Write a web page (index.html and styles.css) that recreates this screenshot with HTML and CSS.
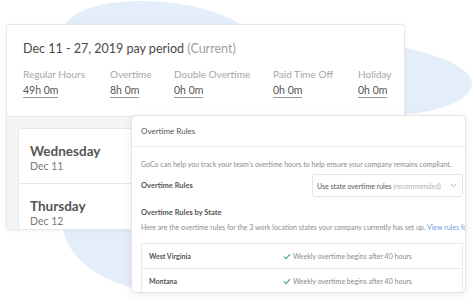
FILE: index.html
```html
<!doctype html>
<html lang="en">
<head>
    <meta charset="UTF-8">
    <meta name="viewport" content="width=device-width, initial-scale=1.0">
    <title>Pay period</title>
    <link rel="stylesheet" href="styles.css">
</head>
<body>
<svg class="blob" width="474" height="300" viewBox="0 0 474 300">
    <path d="M65,24 C78,7 108,1 145,1 C188,2 218,11 240,24 L405,48 C445,56 472,70 472,83 C472,100 440,112 405,114 L300,230 L132,288 C98,278 70,260 63,230 Z"/>
</svg>

<section class="period">
    <header class="period__head">
        <h1 class="period__title">Dec 11 - 27, 2019 pay period <span>(Current)</span></h1>
        <ul class="period__stats">
            <li class="period__stat">
                <span class="period__label">Regular Hours</span>
                <span class="period__value">49h 0m</span>
            </li>
            <li class="period__stat">
                <span class="period__label">Overtime</span>
                <span class="period__value">8h 0m</span>
            </li>
            <li class="period__stat">
                <span class="period__label">Double Overtime</span>
                <span class="period__value">0h 0m</span>
            </li>
            <li class="period__stat">
                <span class="period__label">Paid Time Off</span>
                <span class="period__value">0h 0m</span>
            </li>
            <li class="period__stat">
                <span class="period__label">Holiday</span>
                <span class="period__value">0h 0m</span>
            </li>
        </ul>
    </header>
    <div class="period__days">
        <ul class="days">
            <li class="days__item">
                <span class="days__name">Wednesday</span>
                <span class="days__date">Dec 11</span>
            </li>
            <li class="days__item">
                <span class="days__name">Thursday</span>
                <span class="days__date">Dec 12</span>
            </li>
        </ul>
    </div>
</section>

<section class="modal">
    <h2 class="modal__title">Overtime Rules</h2>
    <div class="modal__body">
        <p class="modal__text">GoCo can help you track your team's overtime hours to help ensure your company remains compliant.</p>
        <div class="modal__field">
            <span class="modal__label">Overtime Rules</span>
            <div class="select">
                <span>Use state overtime rules <em>(recommended)</em></span>
                <svg class="select__arrow" width="7" height="5" viewBox="0 0 7 5"><path d="M1 1.2 L3.5 3.6 L6 1.2"/></svg>
            </div>
        </div>
        <h3 class="modal__label modal__label--section">Overtime Rules by State</h3>
        <p class="modal__text modal__text--intro">Here are the overtime rules for the 3 work location states your company currently has set up. <a href="#">View rules for all states</a></p>
        <table class="rules">
            <tr>
                <td class="rules__state">West Virginia</td>
                <td class="rules__rule"><svg class="check" width="8" height="7" viewBox="0 0 8 7"><path d="M1 3.6 L3 5.6 L7 1.2"/></svg>Weekly overtime begins after 40 hours</td>
            </tr>
            <tr>
                <td class="rules__state">Montana</td>
                <td class="rules__rule"><svg class="check" width="8" height="7" viewBox="0 0 8 7"><path d="M1 3.6 L3 5.6 L7 1.2"/></svg>Weekly overtime begins after 40 hours</td>
            </tr>
        </table>
    </div>
</section>
</body>
</html>
```

FILE: styles.css
```css
html,
body {
    width: 474px;
    height: 300px;
    overflow: hidden;
}

body {
    margin: 0;
    padding: 24px 0 0 6px;
    box-sizing: border-box;
    background: #ffffff;
    font-family: Lato, "Noto Sans", Arial, sans-serif;
    color: #4b4b4b;
    position: relative;
}

ul {
    list-style: none;
    margin: 0;
    padding: 0;
}

.blob {
    position: absolute;
    left: 0;
    top: 0;
}

.blob path {
    fill: #e4eefa;
}

.period {
    position: relative;
    width: 399px;
    height: 206px;
    box-sizing: border-box;
    border: 1px solid #e7e8ea;
    border-radius: 3px;
    background: #ffffff;
    box-shadow: 0 1px 4px rgba(0, 0, 0, 0.06);
    overflow: hidden;
    display: flex;
    flex-direction: column;
}

.period__head {
    flex-shrink: 0;
    height: 92px;
    box-sizing: border-box;
    padding: 15px 16px 0;
    border-bottom: 1px solid #e6e7e9;
}

.period__title {
    margin: 0;
    font-size: 12.5px;
    line-height: 17px;
    font-weight: 400;
    color: #494949;
}

.period__title span {
    color: #a0a0a0;
}

.period__stats {
    margin-top: 11px;
    display: grid;
    grid-template-columns: 87px 64px 99px 85px auto;
}

.period__stat {
    display: flex;
    flex-direction: column;
    align-items: flex-start;
}

.period__label {
    font-size: 10px;
    line-height: 12px;
    color: #a6a6a6;
}

.period__value {
    margin-top: 4px;
    font-size: 10.5px;
    line-height: 12px;
    color: #555555;
    padding-bottom: 1px;
    border-bottom: 1px solid #9a9a9a;
}

.period__days {
    flex: 1;
    min-height: 0;
    overflow: hidden;
    background: #f4f5f7;
    padding: 11px 0 0 11px;
}

.days {
    background: #ffffff;
    border: 1px solid #e7e8ea;
    border-radius: 3px;
    height: 120px;
}

.days__item {
    display: flex;
    flex-direction: column;
    padding: 14px 0 11px 11px;
    border-bottom: 1px solid #e7e8ea;
}

.days__name {
    font-size: 13.5px;
    line-height: 17px;
    font-weight: 700;
    color: #555555;
}

.days__date {
    font-size: 10.5px;
    line-height: 12px;
    color: #7a7a7a;
}

.modal {
    position: absolute;
    left: 131px;
    top: 115px;
    width: 335px;
    height: 178px;
    box-sizing: border-box;
    border: 1px solid #e3e4e6;
    border-radius: 4px;
    background: #ffffff;
    box-shadow: 0 2px 8px rgba(0, 0, 0, 0.08);
    overflow: hidden;
}

.modal__title {
    margin: 0;
    height: 30px;
    padding-left: 9px;
    display: flex;
    align-items: center;
    font-size: 8px;
    font-weight: 400;
    color: #555555;
    border-bottom: 1px solid #ececee;
}

.modal__body {
    padding: 0 0 0 9px;
}

.modal__text {
    margin: 12px 0 0;
    font-size: 7px;
    line-height: 10px;
    color: #8a8a8a;
    white-space: nowrap;
}

.modal__text a {
    color: #6b9ee0;
    text-decoration: none;
}

.modal__field {
    margin-top: 5px;
    display: flex;
    align-items: center;
    justify-content: space-between;
    padding-right: 2px;
}

.modal__label {
    margin: 0;
    font-size: 7.5px;
    line-height: 10px;
    font-weight: 700;
    color: #555555;
}

.modal__label--section {
    margin-top: 11px;
}

.modal__text--intro {
    margin-top: 4px;
}

.select {
    width: 151px;
    height: 23px;
    box-sizing: border-box;
    border: 1px solid #e3e4e6;
    border-radius: 3px;
    padding: 0 5px 0 4px;
    display: flex;
    align-items: center;
    justify-content: space-between;
    font-size: 7px;
    color: #555555;
}

.select em {
    font-style: normal;
    color: #b3b3b3;
}

.select__arrow path {
    fill: none;
    stroke: #a8a8a8;
    stroke-width: 0.9;
}

.rules {
    margin-top: 11px;
    width: 322px;
    border-collapse: collapse;
    border: 1px solid #e8e9eb;
    font-size: 7px;
}

.rules td {
    height: 24px;
    padding: 0;
    border-bottom: 1px solid #e8e9eb;
}

.rules__state {
    width: 134px;
    padding-left: 7px !important;
    font-weight: 700;
    color: #555555;
}

.rules__rule {
    color: #8a8a8a;
}

.check {
    margin-right: 2px;
    vertical-align: -1px;
}

.check path {
    fill: none;
    stroke: #4cb76d;
    stroke-width: 1.3;
}
```
